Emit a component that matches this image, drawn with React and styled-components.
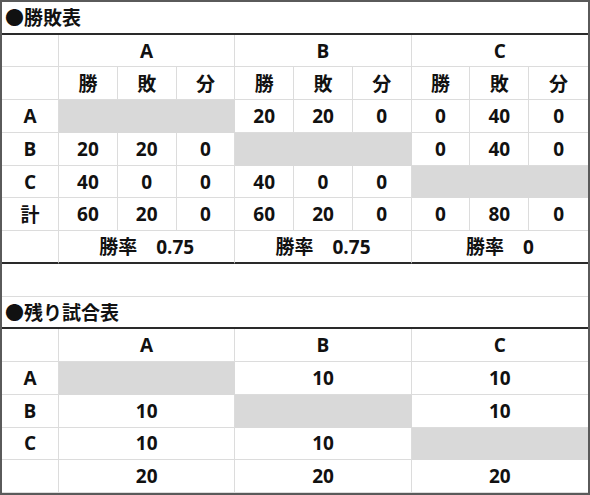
import React from "react";
import styled, { createGlobalStyle } from "styled-components";

const colors = {
  frame: "#5a5a5a",
  grid: "#dcdcdc",
  fill: "#d9d9d9",
  rule: "#2a2a2a",
  text: "#111",
};

const GlobalStyle = createGlobalStyle`
  html, body {
    margin: 0;
    padding: 0;
    background: #fff;
  }
  body {
    font-family: "Open Sans", "Noto Sans CJK JP", sans-serif;
    color: ${colors.text};
  }
`;

const Sheet = styled.div`
  box-sizing: border-box;
  width: 590px;
  height: 495px;
  border: 2px solid ${colors.frame};
  display: grid;
  grid-template-columns: 57px repeat(9, 1fr);
  grid-template-rows: repeat(15, 1fr);
  background: #fff;
`;

const Title = styled.div`
  grid-column: 1 / -1;
  display: flex;
  align-items: center;
  padding-left: 3px;
  font-size: 19px;
  font-weight: 700;
  border-bottom: 2px solid ${colors.rule};
`;

const Blank = styled.div`
  grid-column: 1 / -1;
  border-bottom: 1px solid ${colors.grid};
`;

const Cell = styled.div`
  box-sizing: border-box;
  grid-column: span ${(p) => p.$span || 1};
  display: flex;
  align-items: center;
  justify-content: center;
  font-size: 19px;
  font-weight: 700;
  white-space: pre;
  background: ${(p) => (p.$shaded ? colors.fill : "#fff")};
  border-right: ${(p) => (p.$last || p.$shaded ? "none" : `1px solid ${colors.grid}`)};
  border-bottom: ${(p) =>
    p.$closing ? `2px solid ${colors.rule}` : p.$shaded ? "none" : `1px solid ${colors.grid}`};
`;

const teams = ["A", "B", "C"];

const results = {
  A: [null, [20, 20, 0], [0, 40, 0]],
  B: [[20, 20, 0], null, [0, 40, 0]],
  C: [[40, 0, 0], [40, 0, 0], null],
  計: [[60, 20, 0], [60, 20, 0], [0, 80, 0]],
};

const winRates = ["0.75", "0.75", "0"];

const remaining = {
  A: [null, 10, 10],
  B: [10, null, 10],
  C: [10, 10, null],
  "": [20, 20, 20],
};

const ResultRow = ({ label, groups }) => (
  <>
    <Cell>{label}</Cell>
    {groups.map((g, gi) =>
      g === null ? (
        <Cell key={gi} $span={3} $shaded />
      ) : (
        g.map((v, vi) => (
          <Cell key={`${gi}-${vi}`} $last={gi === 2 && vi === 2}>
            {v}
          </Cell>
        ))
      )
    )}
  </>
);

const App = () => (
  <>
    <GlobalStyle />
    <Sheet>
      <Title>●勝敗表</Title>

      <Cell />
      {teams.map((t, i) => (
        <Cell key={t} $span={3} $last={i === 2}>
          {t}
        </Cell>
      ))}

      <Cell />
      {teams.map((t, i) =>
        ["勝", "敗", "分"].map((h, j) => (
          <Cell key={`${t}${h}`} $last={i === 2 && j === 2}>
            {h}
          </Cell>
        ))
      )}

      {Object.entries(results).map(([label, groups]) => (
        <ResultRow key={label} label={label} groups={groups} />
      ))}

      <Cell $closing />
      {winRates.map((r, i) => (
        <Cell key={i} $span={3} $last={i === 2} $closing>
          {`勝率　${r}`}
        </Cell>
      ))}

      <Blank />
      <Title>●残り試合表</Title>

      <Cell />
      {teams.map((t, i) => (
        <Cell key={t} $span={3} $last={i === 2}>
          {t}
        </Cell>
      ))}

      {Object.entries(remaining).map(([label, vals]) => (
        <React.Fragment key={label || "total"}>
          <Cell>{label}</Cell>
          {vals.map((v, i) =>
            v === null ? (
              <Cell key={i} $span={3} $shaded />
            ) : (
              <Cell key={i} $span={3} $last={i === 2}>
                {v}
              </Cell>
            )
          )}
        </React.Fragment>
      ))}
    </Sheet>
  </>
);

export default App;
